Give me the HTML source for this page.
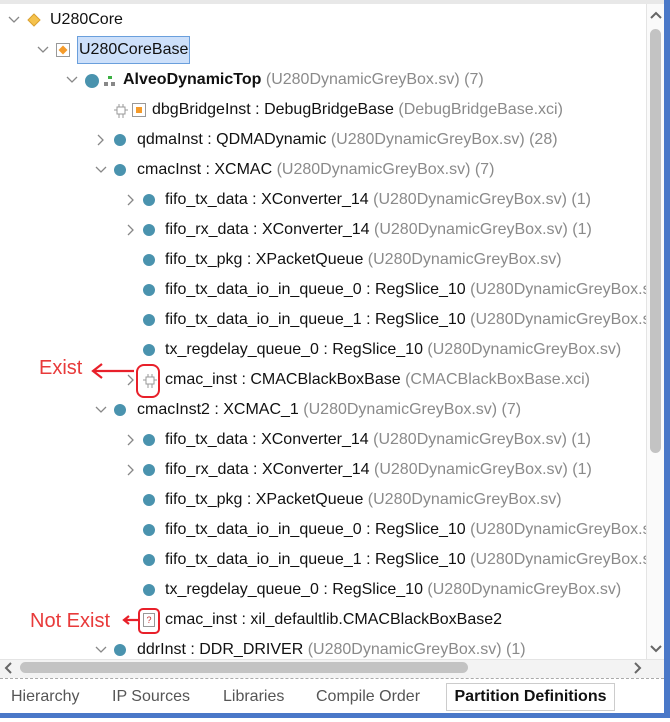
<!DOCTYPE html>
<html><head><style>
body{margin:0;width:670px;height:722px;background:#fff;position:relative;overflow:hidden;font-family:"Liberation Sans",Arial,sans-serif;font-size:16px;color:#111}
#tree{position:absolute;left:0;top:1px;width:646px;height:658px;overflow:hidden}
.r{position:absolute;height:20px;line-height:20px;white-space:nowrap}
.g{color:#8a8a8a}
.c{position:absolute;width:12px;height:12px;border-radius:50%;background:#4a93ae}
.tab{position:absolute;top:684px;height:26px;line-height:26px;color:#555;font-size:16px}
</style></head><body>
<div style="position:absolute;left:0;top:0;width:664px;height:4px;background:#e8e8e8"></div>
<!-- vertical scrollbar -->
<div style="position:absolute;left:646px;top:4px;width:18px;height:655px;background:#fafafa;border-left:1px solid #e4e4e4"></div>
<div style="position:absolute;left:650px;top:29px;width:11px;height:424px;background:#c3c3c3;border-radius:6px"></div>
<svg style="position:absolute;left:649px;top:10px" width="14" height="10"><path d="M2 8 L7 3 L12 8" stroke="#666" stroke-width="2" fill="none"/></svg>
<svg style="position:absolute;left:649px;top:644px" width="14" height="10"><path d="M2 2 L7 7 L12 2" stroke="#666" stroke-width="2" fill="none"/></svg>
<div style="position:absolute;left:664px;top:0;width:6px;height:718px;background:#4a78c8"></div>
<!-- horizontal scrollbar -->
<div style="position:absolute;left:0;top:659px;width:664px;height:18px;background:#f3f3f3;border-top:1px solid #e4e4e4"></div>
<div style="position:absolute;left:20px;top:662px;width:448px;height:11px;background:#c3c3c3;border-radius:6px"></div>
<svg style="position:absolute;left:3px;top:661px" width="10" height="14"><path d="M8 2 L3 7 L8 12" stroke="#666" stroke-width="2" fill="none"/></svg>
<svg style="position:absolute;left:633px;top:661px" width="10" height="14"><path d="M2 2 L7 7 L2 12" stroke="#666" stroke-width="2" fill="none"/></svg>
<div style="position:absolute;left:0;top:678px;width:664px;border-top:1px dashed #aaa"></div>
<div class="tab" style="left:11px">Hierarchy</div>
<div class="tab" style="left:112px">IP Sources</div>
<div class="tab" style="left:223px">Libraries</div>
<div class="tab" style="left:316px">Compile Order</div>
<div class="tab" style="left:446px;width:167px;top:683px;border:1px solid #ccc;background:#fff;color:#111;font-weight:bold;text-align:center">Partition Definitions</div>
<div style="position:absolute;left:0;top:713px;width:670px;height:5px;background:#4a78c8"></div>

<div id="tree">
<svg style="position:absolute;left:8px;top:15px" width="12" height="8"><path d="M1 1 L6 6 L11 1" stroke="#888" stroke-width="1.3" fill="none"/></svg>
<svg style="position:absolute;left:27px;top:12px" width="14" height="14"><path d="M7 1 L13 7 L7 13 L1 7Z" fill="#f5c24c" stroke="#d9a030"/></svg>
<div class="r" style="left:50px;top:9px">U280Core</div>

<svg style="position:absolute;left:37px;top:45px" width="12" height="8"><path d="M1 1 L6 6 L11 1" stroke="#888" stroke-width="1.3" fill="none"/></svg>
<div style="position:absolute;left:56px;top:42px;width:12px;height:12px;border:1px solid #999;background:#fff"></div>
<svg style="position:absolute;left:57px;top:43px" width="12" height="12"><path d="M6 1.5 L10.5 6 L6 10.5 L1.5 6Z" fill="#f59b2a"/></svg>
<div class="r" style="left:77px;top:35px;height:26px;line-height:26px;padding:0 1px;background:#cde0fa;border:1px solid #6a9fdc">U280CoreBase</div>

<svg style="position:absolute;left:66px;top:75px" width="12" height="8"><path d="M1 1 L6 6 L11 1" stroke="#888" stroke-width="1.3" fill="none"/></svg>
<div class="c" style="left:85px;top:73px;width:14px;height:14px"></div>
<svg style="position:absolute;left:103px;top:73px" width="14" height="14"><rect x="5" y="2" width="4" height="3" fill="#3cb043"/><rect x="1" y="8" width="4" height="4" fill="#888"/><rect x="8" y="8" width="4" height="4" fill="#888"/></svg>
<div class="r" style="left:123px;top:69px"><b>AlveoDynamicTop</b> <span class="g">(U280DynamicGreyBox.sv) (7)</span></div>

<svg style="position:absolute;left:113px;top:102px" width="16" height="16"><path d="M4 4 H12 V11 H4Z M1 7 H4 M12 7 H15 M6 11 V15 M10 11 V15 M6 1 V4 M10 1 V4" stroke="#999" fill="none"/></svg>
<div style="position:absolute;left:132px;top:102px;width:12px;height:12px;border:1px solid #999"></div>
<div style="position:absolute;left:136px;top:106px;width:6px;height:6px;background:#f59b2a"></div>
<div class="r" style="left:152px;top:99px">dbgBridgeInst : DebugBridgeBase <span class="g">(DebugBridgeBase.xci)</span></div>

<svg style="position:absolute;left:97px;top:133px" width="8" height="12"><path d="M1 1 L6 6 L1 11" stroke="#888" stroke-width="1.3" fill="none"/></svg>
<div class="c" style="left:114px;top:133px"></div>
<div class="r" style="left:137px;top:129px">qdmaInst : QDMADynamic <span class="g">(U280DynamicGreyBox.sv) (28)</span></div>

<svg style="position:absolute;left:95px;top:165px" width="12" height="8"><path d="M1 1 L6 6 L11 1" stroke="#888" stroke-width="1.3" fill="none"/></svg>
<div class="c" style="left:114px;top:163px"></div>
<div class="r" style="left:137px;top:159px">cmacInst : XCMAC <span class="g">(U280DynamicGreyBox.sv) (7)</span></div>

<svg style="position:absolute;left:127px;top:193px" width="8" height="12"><path d="M1 1 L6 6 L1 11" stroke="#888" stroke-width="1.3" fill="none"/></svg>
<div class="c" style="left:143px;top:193px"></div>
<div class="r" style="left:165px;top:189px">fifo_tx_data : XConverter_14 <span class="g">(U280DynamicGreyBox.sv) (1)</span></div>
<svg style="position:absolute;left:127px;top:223px" width="8" height="12"><path d="M1 1 L6 6 L1 11" stroke="#888" stroke-width="1.3" fill="none"/></svg>
<div class="c" style="left:143px;top:223px"></div>
<div class="r" style="left:165px;top:219px">fifo_rx_data : XConverter_14 <span class="g">(U280DynamicGreyBox.sv) (1)</span></div>
<div class="c" style="left:143px;top:253px"></div>
<div class="r" style="left:165px;top:249px">fifo_tx_pkg : XPacketQueue <span class="g">(U280DynamicGreyBox.sv)</span></div>
<div class="c" style="left:143px;top:283px"></div>
<div class="r" style="left:165px;top:279px">fifo_tx_data_io_in_queue_0 : RegSlice_10 <span class="g">(U280DynamicGreyBox.sv)</span></div>
<div class="c" style="left:143px;top:313px"></div>
<div class="r" style="left:165px;top:309px">fifo_tx_data_io_in_queue_1 : RegSlice_10 <span class="g">(U280DynamicGreyBox.sv)</span></div>
<div class="c" style="left:143px;top:343px"></div>
<div class="r" style="left:165px;top:339px">tx_regdelay_queue_0 : RegSlice_10 <span class="g">(U280DynamicGreyBox.sv)</span></div>

<svg style="position:absolute;left:127px;top:373px" width="8" height="12"><path d="M1 1 L6 6 L1 11" stroke="#888" stroke-width="1.3" fill="none"/></svg>
<svg style="position:absolute;left:142px;top:372px" width="16" height="16"><path d="M4 4 H12 V11 H4Z M1 7 H4 M12 7 H15 M6 11 V15 M10 11 V15 M6 1 V4 M10 1 V4" stroke="#999" fill="none"/></svg>
<div style="position:absolute;left:136px;top:363px;width:20px;height:30px;border:2px solid #e8202a;border-radius:8px"></div>
<div class="r" style="left:165px;top:369px">cmac_inst : CMACBlackBoxBase <span class="g">(CMACBlackBoxBase.xci)</span></div>
<div class="r" style="left:39px;top:357px;color:#e83a3a;font-size:20px">Exist</div>
<svg style="position:absolute;left:90px;top:360px" width="46" height="20"><path d="M44 10 H4 M12 3 L3 10 L12 17" stroke="#e8202a" stroke-width="2.2" fill="none"/></svg>

<svg style="position:absolute;left:95px;top:405px" width="12" height="8"><path d="M1 1 L6 6 L11 1" stroke="#888" stroke-width="1.3" fill="none"/></svg>
<div class="c" style="left:114px;top:403px"></div>
<div class="r" style="left:137px;top:399px">cmacInst2 : XCMAC_1 <span class="g">(U280DynamicGreyBox.sv) (7)</span></div>

<svg style="position:absolute;left:127px;top:433px" width="8" height="12"><path d="M1 1 L6 6 L1 11" stroke="#888" stroke-width="1.3" fill="none"/></svg>
<div class="c" style="left:143px;top:433px"></div>
<div class="r" style="left:165px;top:429px">fifo_tx_data : XConverter_14 <span class="g">(U280DynamicGreyBox.sv) (1)</span></div>
<svg style="position:absolute;left:127px;top:463px" width="8" height="12"><path d="M1 1 L6 6 L1 11" stroke="#888" stroke-width="1.3" fill="none"/></svg>
<div class="c" style="left:143px;top:463px"></div>
<div class="r" style="left:165px;top:459px">fifo_rx_data : XConverter_14 <span class="g">(U280DynamicGreyBox.sv) (1)</span></div>
<div class="c" style="left:143px;top:493px"></div>
<div class="r" style="left:165px;top:489px">fifo_tx_pkg : XPacketQueue <span class="g">(U280DynamicGreyBox.sv)</span></div>
<div class="c" style="left:143px;top:523px"></div>
<div class="r" style="left:165px;top:519px">fifo_tx_data_io_in_queue_0 : RegSlice_10 <span class="g">(U280DynamicGreyBox.sv)</span></div>
<div class="c" style="left:143px;top:553px"></div>
<div class="r" style="left:165px;top:549px">fifo_tx_data_io_in_queue_1 : RegSlice_10 <span class="g">(U280DynamicGreyBox.sv)</span></div>
<div class="c" style="left:143px;top:583px"></div>
<div class="r" style="left:165px;top:579px">tx_regdelay_queue_0 : RegSlice_10 <span class="g">(U280DynamicGreyBox.sv)</span></div>

<div style="position:absolute;left:143px;top:612px;width:10px;height:12px;border:1px solid #999;font-size:9px;line-height:12px;text-align:center;color:#c03030">?</div>
<div style="position:absolute;left:138px;top:607px;width:18px;height:22px;border:2px solid #e8202a;border-radius:5px"></div>
<div class="r" style="left:165px;top:609px">cmac_inst : xil_defaultlib.CMACBlackBoxBase2</div>
<div class="r" style="left:30px;top:610px;color:#e83a3a;font-size:20px">Not Exist</div>
<svg style="position:absolute;left:121px;top:612px" width="18" height="14"><path d="M17 7 H4 M8 3 L3 7 L8 11" stroke="#e8202a" stroke-width="2.2" fill="none"/></svg>

<svg style="position:absolute;left:95px;top:645px" width="12" height="8"><path d="M1 1 L6 6 L11 1" stroke="#888" stroke-width="1.3" fill="none"/></svg>
<div class="c" style="left:114px;top:643px"></div>
<div class="r" style="left:137px;top:639px">ddrInst : DDR_DRIVER <span class="g">(U280DynamicGreyBox.sv) (1)</span></div>
</div>
</body></html>
